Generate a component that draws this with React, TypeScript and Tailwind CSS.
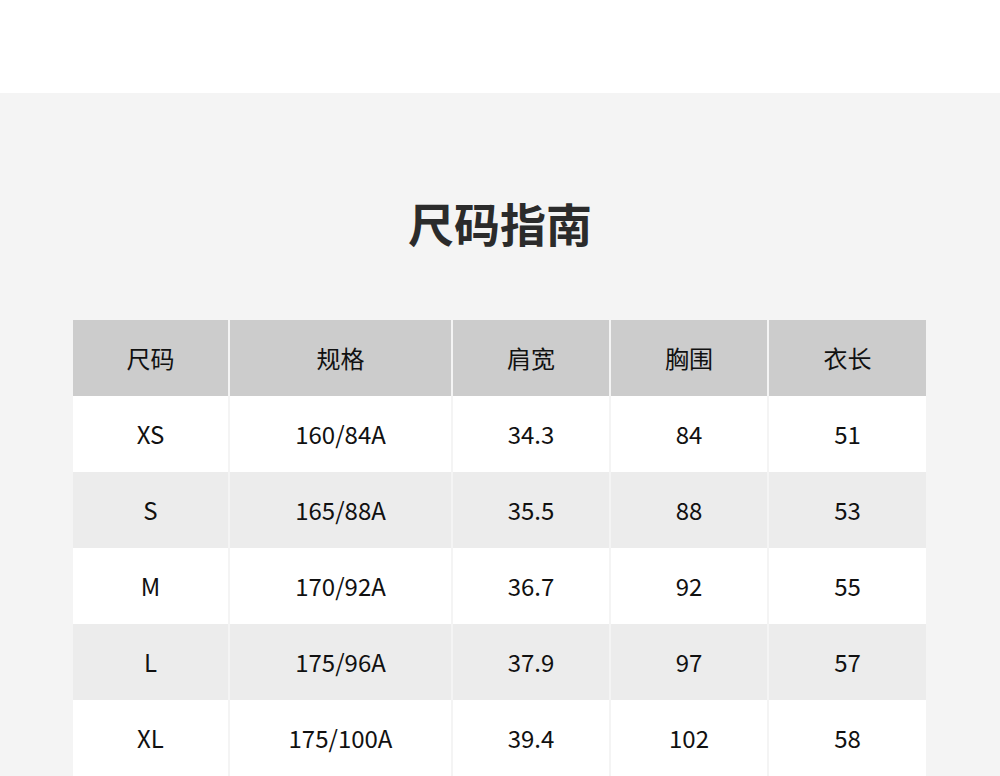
const headers = ["尺码", "规格", "肩宽", "胸围", "衣长"];

const rows: string[][] = [
  ["XS", "160/84A", "34.3", "84", "51"],
  ["S", "165/88A", "35.5", "88", "53"],
  ["M", "170/92A", "36.7", "92", "55"],
  ["L", "175/96A", "37.9", "97", "57"],
  ["XL", "175/100A", "39.4", "102", "58"],
];

const font = { fontFamily: '"Noto Sans CJK SC", "Noto Sans", sans-serif' };

export default function App() {
  return (
    <div className="min-h-[776px] w-[1000px] bg-[#f4f4f4]" style={font}>
      <div className="h-[93px] bg-white" />
      <div className="pt-[96px]">
        <h1 className="h-[66px] text-center text-[46px] font-bold leading-[66px] text-[#2b2b2b]">
          尺码指南
        </h1>
        <div className="mx-[73px] mt-[65px] grid grid-cols-[155px_221px_156px_156px_157px] gap-x-[2px]">
          {headers.map((h) => (
            <div
              key={h}
              className="flex h-[76px] items-center justify-center bg-[#cccccc] text-[24px] text-[#111]"
            >
              {h}
            </div>
          ))}
          {rows.map((row, i) =>
            row.map((cell, j) => (
              <div
                key={`${i}-${j}`}
                className={`flex h-[76px] items-center justify-center text-[24px] text-[#111] ${
                  i % 2 === 0 ? "bg-white" : "bg-[#ececec]"
                }`}
              >
                {cell}
              </div>
            )),
          )}
        </div>
      </div>
    </div>
  );
}
